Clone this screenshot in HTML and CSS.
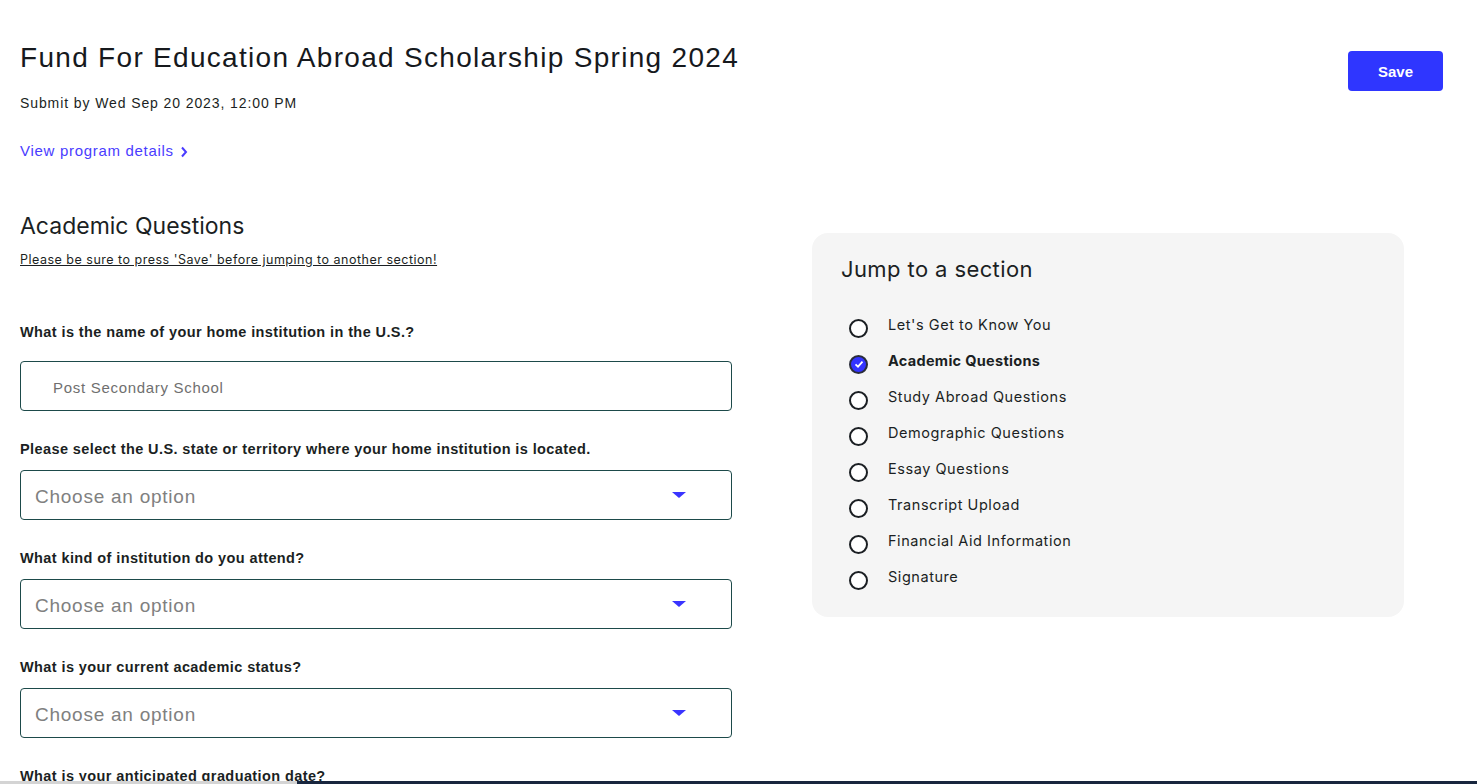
FILE: index.html
```html
<!DOCTYPE html>
<html lang="en">
<head>
<meta charset="utf-8">
<title>Fund For Education Abroad Scholarship Spring 2024</title>
<link rel="stylesheet" href="styles.css">
</head>
<body>
<div class="page">
  <header class="top">
    <div class="top-left">
      <h1 class="title">Fund For Education Abroad Scholarship Spring 2024</h1>
      <p class="deadline">Submit by Wed Sep 20 2023, 12:00 PM</p>
      <a class="details" href="#">View program details <svg class="chev" width="8" height="12" viewBox="0 0 8 12"><path d="M2 1.5 L6 6 L2 10.5" fill="none" stroke="currentColor" stroke-width="2"/></svg></a>
    </div>
    <button class="save" type="button">Save</button>
  </header>

  <div class="content">
    <section class="form">
      <h2 class="section-title">Academic Questions</h2>
      <p class="note">Please be sure to press 'Save' before jumping to another section!</p>

      <div class="field first">
        <label class="label">What is the name of your home institution in the U.S.?</label>
        <div class="input text-input">Post Secondary School</div>
      </div>

      <div class="field">
        <label class="label">Please select the U.S. state or territory where your home institution is located.</label>
        <div class="input select">Choose an option<span class="caret"></span></div>
      </div>

      <div class="field">
        <label class="label">What kind of institution do you attend?</label>
        <div class="input select">Choose an option<span class="caret"></span></div>
      </div>

      <div class="field">
        <label class="label">What is your current academic status?</label>
        <div class="input select">Choose an option<span class="caret"></span></div>
      </div>

      <div class="field">
        <label class="label">What is your anticipated graduation date?</label>
      </div>
    </section>

    <aside class="jump">
      <h3 class="jump-title">Jump to a section</h3>
      <ul class="steps">
        <li class="step"><span class="radio"></span>Let's Get to Know You</li>
        <li class="step active"><span class="radio checked"><svg width="12" height="12" viewBox="0 0 12 12"><path d="M2.5 6.3 L5 8.6 L9.5 3.6" fill="none" stroke="#fff" stroke-width="1.8"/></svg></span>Academic Questions</li>
        <li class="step"><span class="radio"></span>Study Abroad Questions</li>
        <li class="step"><span class="radio"></span>Demographic Questions</li>
        <li class="step"><span class="radio"></span>Essay Questions</li>
        <li class="step"><span class="radio"></span>Transcript Upload</li>
        <li class="step"><span class="radio"></span>Financial Aid Information</li>
        <li class="step"><span class="radio"></span>Signature</li>
      </ul>
    </aside>
  </div>
</div>
<div class="bottom-bar"><span class="bar-gray"></span><span class="bar-navy"></span></div>
</body>
</html>
```

FILE: styles.css
```css
* { box-sizing: border-box; }
html, body { margin: 0; padding: 0; background: #fff; }
body {
  font-family: "Liberation Sans", Arial, sans-serif;
  color: #1b1f23;
  overflow: hidden;
  height: 784px;
}
.page {
  padding: 41px 34px 0 20px;
}
.top {
  display: flex;
  justify-content: space-between;
  align-items: flex-start;
}
.title {
  margin: 0;
  font-size: 28px;
  line-height: 34px;
  font-weight: 400;
  letter-spacing: 1.3px;
  color: #16191d;
}
.deadline {
  margin: 18px 0 0;
  font-size: 14px;
  line-height: 20px;
  letter-spacing: 0.9px;
}
.details {
  display: inline-flex;
  align-items: center;
  gap: 6px;
  margin-top: 28px;
  font-size: 15px;
  line-height: 20px;
  letter-spacing: 0.7px;
  color: #4a3cff;
  text-decoration: none;
}
.chev { margin-top: 2px; }
.save {
  margin-top: 10px;
  width: 95px;
  height: 40px;
  border: 0;
  border-radius: 4px;
  background: #2f36ff;
  color: #fff;
  font-family: "Liberation Sans", Arial, sans-serif;
  font-weight: 700;
  font-size: 15px;
}
.content {
  display: flex;
  align-items: flex-start;
  gap: 80px;
  margin-top: 50px;
}
.form { width: 712px; flex: none; }
.section-title {
  margin: 0;
  font-family: Inter, "Liberation Sans", sans-serif;
  font-weight: 400;
  font-size: 23px;
  line-height: 30px;
  color: #1b1f23;
}
.note {
  margin: 10px 0 0;
  font-family: Inter, "Liberation Sans", sans-serif;
  font-size: 12.5px;
  line-height: 18px;
  letter-spacing: 0.5px;
  text-decoration: underline;
  color: #1b1f23;
}
.field { margin-top: 28px; }
.field.first { margin-top: 53px; }
.label {
  display: block;
  font-weight: 700;
  font-size: 14.5px;
  line-height: 20px;
  letter-spacing: 0.4px;
  color: #1b1f23;
}
.input {
  display: flex;
  align-items: center;
  height: 50px;
  border: 1px solid #1d4a4a;
  border-radius: 4px;
  margin-top: 11px;
  color: #808080;
}
.text-input {
  margin-top: 19px;
  padding-left: 32px;
  padding-top: 2px;
  font-size: 15px;
  letter-spacing: 0.7px;
  color: #6f6f6f;
}
.select {
  position: relative;
  padding-left: 14px;
  padding-top: 3px;
  font-size: 19px;
  letter-spacing: 0.75px;
}
.caret {
  position: absolute;
  right: 45px;
  top: 21px;
  width: 0;
  height: 0;
  border-left: 7px solid transparent;
  border-right: 7px solid transparent;
  border-top: 6px solid #3a34ff;
}
.jump {
  margin-top: 22px;
  width: 592px;
  flex: none;
  background: #f5f5f5;
  border-radius: 16px;
  padding: 22px 29px 23px;
}
.jump-title {
  margin: 0;
  font-family: Inter, "Liberation Sans", sans-serif;
  font-weight: 400;
  font-size: 22px;
  line-height: 28px;
  letter-spacing: 0.4px;
  color: #1b1f23;
}
.steps {
  list-style: none;
  margin: 23px 0 0;
  padding: 0 0 0 8px;
}
.step {
  display: flex;
  align-items: center;
  height: 36px;
  font-family: Inter, "Liberation Sans", sans-serif;
  font-size: 14.5px;
  letter-spacing: 0.55px;
  color: #1b1f23;
}
.step.active { font-weight: 700; letter-spacing: 0.3px; }
.radio {
  flex: none;
  width: 19px;
  height: 19px;
  border: 2px solid #1b1f23;
  border-radius: 50%;
  margin: 8px 20px 0 0;
  display: flex;
  align-items: center;
  justify-content: center;
  background: #fff;
}
.radio.checked { background: #3333ff; border-color: #2a2d3a; }
.bottom-bar {
  position: fixed;
  left: 0;
  right: 0;
  bottom: 0;
  height: 3px;
  display: flex;
}
.bar-gray { width: 297px; background: #d4d4d4; }
.bar-navy { flex: 1; background: #18263e; }
```
